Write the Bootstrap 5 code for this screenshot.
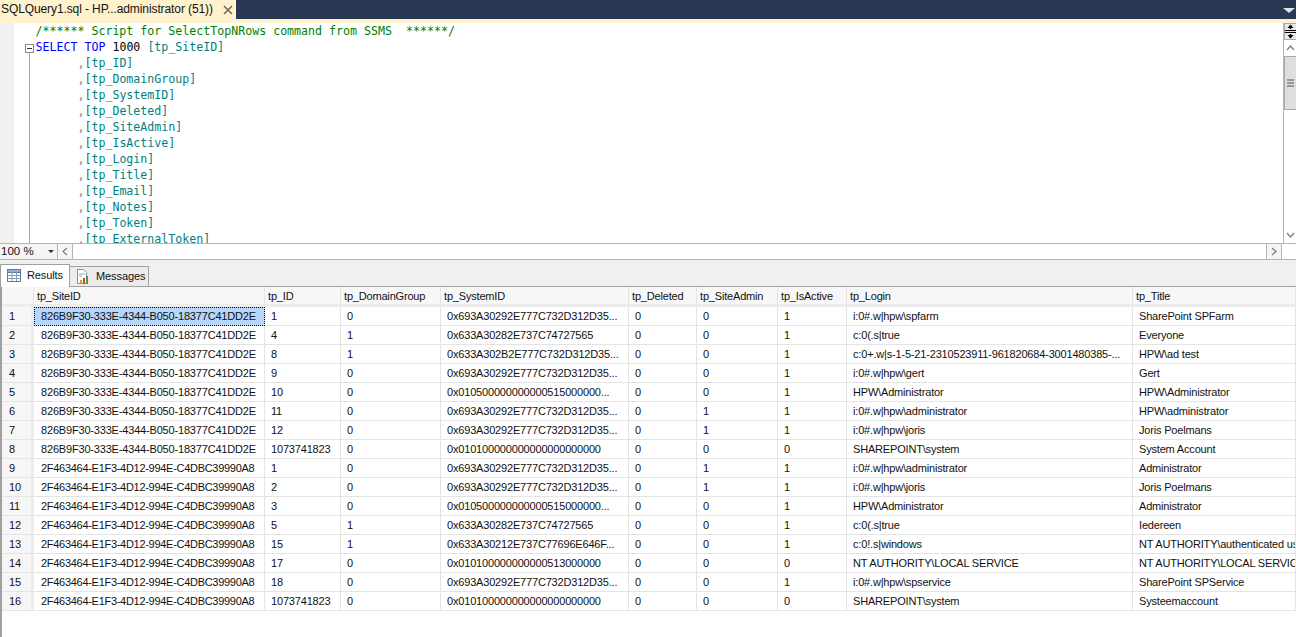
<!DOCTYPE html>
<html lang="en">
<head>
<meta charset="utf-8">
<title>SQLQuery1.sql</title>
<link href="https://cdn.jsdelivr.net/npm/bootstrap@5.3.0/dist/css/bootstrap.min.css" rel="stylesheet">
<style>
html,body{height:637px;overflow:hidden;background:#fff}
body{font-family:"Liberation Sans",Arial,sans-serif;font-size:12px;color:#111}
.app-top{height:19px;background:#293955}
.doc-tab{width:236px;height:19px;background:#fff2cc;color:#111;font-size:12px;letter-spacing:-.1px;line-height:19px;padding-left:1px;white-space:nowrap}
.tab-close{width:14px;height:14px;margin-left:8px;flex:none}
.top-drop{width:0;height:0;border-left:6px solid transparent;border-right:6px solid transparent;border-top:5px solid #dfe3ea;margin:1px 1px 0 0}
.app-strip{height:4px;background:#fff2cc}
.editor{height:220px;overflow:hidden}
.ed-margin{width:14px;background:#f0f0f0;flex:none}
.ed-fold{width:21.500px;flex:none;position:relative}
.fold-box{position:absolute;left:11px;top:21px;width:9px;height:9px;border:1px solid #8a8a8a;background:#fff}
.fold-box::after{content:"";position:absolute;left:1px;right:1px;top:3px;height:1px;background:#333}
.fold-line{position:absolute;left:15px;top:30px;bottom:0;width:1px;background:#a5a5a5}
.code{font-family:"DejaVu Sans Mono","Liberation Mono",monospace;font-size:11.62px;line-height:16px;white-space:pre;padding-top:0;margin:0;flex:1;min-width:0;overflow:hidden}
.c-g{color:#008000}.c-b{color:#0000ff}.c-t{color:#008080}.c-d{color:#808080}.c-k{color:#000}
.vbar{width:13px;flex:none;background:#fff;border-left:1px solid #b5b5b5;display:flex;flex-direction:column}
.split-btn{height:17px;background:#e6e9ef;border:1px solid #a9a9a9;border-right:0}
.arrow-cell{height:16px;display:flex;align-items:center;justify-content:center}
.v-thumb{height:54px;background:#dedede;border:1px solid #a8a8a8;border-width:1px 0 1px 1px;display:flex;align-items:center;justify-content:center}
.hbar{height:17px;background:#fff;border-top:1px solid #b5b5b5;border-bottom:1px solid #b5b5b5;padding-right:14px}
.zoom-box{width:57px;line-height:15px;padding-left:1px;font-size:11.5px;position:relative;background:#f5f5f5}
.zoom-caret{position:absolute;left:48px;top:6px;width:0;height:0;border-left:3px solid transparent;border-right:3px solid transparent;border-top:3px solid #333}
.h-arrow{width:16px;display:flex;align-items:center;justify-content:center;background:#f5f5f5;border:solid #b5b5b5;border-width:0 1px}
.h-track{flex:1;background:#fff}
.tabs-band{height:26px;background:#f0f0f0;padding-top:4px;position:relative;font-size:11px;letter-spacing:-.1px}
.res-tab{border:1px solid #a0a0a0;border-bottom:0;display:flex;align-items:center}
.res-tab.on{width:70px;height:23px;background:#fff;padding:0 0 2px 6px;position:relative;z-index:1}
.res-tab.off{width:80px;margin-top:2px;margin-left:-1px;height:20px;background:#ececec;padding-left:6px}
.res-tab svg{margin-right:6px;flex:none}
.grid-wrap{border-top:1px solid #a0a0a0;border-left:2px solid #a0a0a0;height:352px;overflow:hidden;background:#fff}
.rs{table-layout:fixed;width:1294px;border-collapse:separate;border-spacing:0;margin:0;font-size:11px;letter-spacing:-.18px;color:#111}
.rs th,.rs td{font-weight:400;height:19px;padding:0 0 0 6px;line-height:18px;white-space:nowrap;overflow:hidden;border-right:1px solid #e4e4e4;border-bottom:1px solid #e4e4e4}
.rs th{height:20px;background:#f7f7f7;padding:2px 0 0 3px;border-bottom:3px solid #ececec;line-height:15px}
.rs .corner{background:#f7f7f7}
.rs .rowno{background:#f6f6f6;border-right:3px solid #ececec;padding-left:7px}
.rs .sel{background:#b5d5fb;outline:1px dotted #000;outline-offset:-1px}
.rs td.gid{padding-left:7px}
.rs td.gid-tight{letter-spacing:-.29px}
</style>
</head>
<body>
<div class="app-top d-flex justify-content-between align-items-center">
  <div class="doc-tab d-flex align-items-center"><span>SQLQuery1.sql - HP...administrator (51))</span>
    <svg class="tab-close" viewBox="0 0 14 14"><path d="M3 3l8 8M11 3l-8 8" stroke="#6b6b5d" stroke-width="1.6" fill="none"/></svg></div>
  <div class="top-drop"></div>
</div>
<div class="app-strip"></div>
<div class="editor d-flex">
  <div class="ed-margin"></div>
  <div class="ed-fold"><div class="fold-box"></div><div class="fold-line"></div></div>
  <pre class="code"><span class="c-g">/****** Script for SelectTopNRows command from SSMS  ******/</span>
<span class="c-b">SELECT</span> <span class="c-b">TOP</span> <span class="c-k">1000</span> <span class="c-t">[tp_SiteID]</span>
      <span class="c-d">,</span><span class="c-t">[tp_ID]</span>
      <span class="c-d">,</span><span class="c-t">[tp_DomainGroup]</span>
      <span class="c-d">,</span><span class="c-t">[tp_SystemID]</span>
      <span class="c-d">,</span><span class="c-t">[tp_Deleted]</span>
      <span class="c-d">,</span><span class="c-t">[tp_SiteAdmin]</span>
      <span class="c-d">,</span><span class="c-t">[tp_IsActive]</span>
      <span class="c-d">,</span><span class="c-t">[tp_Login]</span>
      <span class="c-d">,</span><span class="c-t">[tp_Title]</span>
      <span class="c-d">,</span><span class="c-t">[tp_Email]</span>
      <span class="c-d">,</span><span class="c-t">[tp_Notes]</span>
      <span class="c-d">,</span><span class="c-t">[tp_Token]</span>
      <span class="c-d">,</span><span class="c-t">[tp_ExternalToken]</span></pre>
  <div class="vbar">
    <div class="split-btn d-flex align-items-center justify-content-center">
      <svg width="11" height="15" viewBox="0 0 11 15"><path d="M0 6.500h11M0 8.500h11" stroke="#000"/><path d="M5.500 1v4M5.500 10v4" stroke="#000" stroke-width="1.400"/><path d="M2.500 4l3-3.500 3 3.500zM2.500 11l3 3.500 3-3.500z" fill="#000"/></svg>
    </div>
    <div class="arrow-cell"><svg width="9" height="6" viewBox="0 0 9 6"><path d="M1 5l3.500-4 3.500 4" stroke="#7a7a7a" stroke-width="1.200" fill="none"/></svg></div>
    <div class="v-thumb"><svg width="7" height="8" viewBox="0 0 7 8"><path d="M0 1h7M0 4h7M0 7h7" stroke="#808080" stroke-width="1.600"/></svg></div>
    <div class="flex-grow-1"></div>
    <div class="arrow-cell"><svg width="9" height="6" viewBox="0 0 9 6"><path d="M1 1l3.500 4 3.500-4" stroke="#7a7a7a" stroke-width="1.200" fill="none"/></svg></div>
  </div>
</div>
<div class="hbar d-flex">
  <div class="zoom-box">100 %<span class="zoom-caret"></span></div>
  <div class="h-arrow"><svg width="6" height="9" viewBox="0 0 6 9"><path d="M5 1L1 4.500 5 8" stroke="#7a7a7a" stroke-width="1.200" fill="none"/></svg></div>
  <div class="h-track"></div>
  <div class="h-arrow"><svg width="6" height="9" viewBox="0 0 6 9"><path d="M1 1l4 3.500L1 8" stroke="#7a7a7a" stroke-width="1.200" fill="none"/></svg></div>
</div>
<div class="tabs-band d-flex align-items-start">
  <div class="res-tab on">
    <svg width="14" height="13" viewBox="0 0 14 13"><rect x=".5" y=".5" width="13" height="12" fill="#fff" stroke="#5f7f9f"/><rect x=".5" y=".5" width="13" height="3" fill="#8fb0d0" stroke="#5f7f9f"/><path d="M5 3v9M9.500 3v9M1 6.500h12M1 9.500h12" stroke="#7f9fbf"/></svg>
    <span>Results</span>
  </div>
  <div class="res-tab off">
    <svg width="14" height="17" viewBox="0 0 14 17"><path d="M1.500 1.500h6l3 3v11h-9z" fill="#fff" stroke="#8a8f96"/><path d="M3 6h6M3 8h3" stroke="#9aa5b5"/><rect x="7" y="10" width="2" height="6" fill="#d04030"/><rect x="10" y="8" width="2" height="8" fill="#3f9f4f"/><rect x="4" y="12" width="2" height="4" fill="#d9a020"/></svg>
    <span>Messages</span>
  </div>
</div>
<div class="grid-wrap">
<table class="rs">
<colgroup><col style="width:32px"><col style="width:231px"><col style="width:76px"><col style="width:100px"><col style="width:188px"><col style="width:68px"><col style="width:81px"><col style="width:69px"><col style="width:286px"><col></colgroup>
<thead><tr><th class="corner"></th><th>tp_SiteID</th><th>tp_ID</th><th>tp_DomainGroup</th><th>tp_SystemID</th><th>tp_Deleted</th><th>tp_SiteAdmin</th><th>tp_IsActive</th><th>tp_Login</th><th>tp_Title</th></tr></thead>
<tbody>
<tr><td class="rowno">1</td><td class="gid sel">826B9F30-333E-4344-B050-18377C41DD2E</td><td>1</td><td>0</td><td>0x693A30292E777C732D312D35...</td><td>0</td><td>0</td><td>1</td><td>i:0#.w|hpw\spfarm</td><td>SharePoint SPFarm</td></tr>
<tr><td class="rowno">2</td><td class="gid">826B9F30-333E-4344-B050-18377C41DD2E</td><td>4</td><td>1</td><td>0x633A30282E737C74727565</td><td>0</td><td>0</td><td>1</td><td>c:0(.s|true</td><td>Everyone</td></tr>
<tr><td class="rowno">3</td><td class="gid">826B9F30-333E-4344-B050-18377C41DD2E</td><td>8</td><td>1</td><td>0x633A302B2E777C732D312D35...</td><td>0</td><td>0</td><td>1</td><td>c:0+.w|s-1-5-21-2310523911-961820684-3001480385-...</td><td>HPW\ad test</td></tr>
<tr><td class="rowno">4</td><td class="gid">826B9F30-333E-4344-B050-18377C41DD2E</td><td>9</td><td>0</td><td>0x693A30292E777C732D312D35...</td><td>0</td><td>0</td><td>1</td><td>i:0#.w|hpw\gert</td><td>Gert</td></tr>
<tr><td class="rowno">5</td><td class="gid">826B9F30-333E-4344-B050-18377C41DD2E</td><td>10</td><td>0</td><td>0x010500000000000515000000...</td><td>0</td><td>0</td><td>1</td><td>HPW\Administrator</td><td>HPW\Administrator</td></tr>
<tr><td class="rowno">6</td><td class="gid">826B9F30-333E-4344-B050-18377C41DD2E</td><td>11</td><td>0</td><td>0x693A30292E777C732D312D35...</td><td>0</td><td>1</td><td>1</td><td>i:0#.w|hpw\administrator</td><td>HPW\administrator</td></tr>
<tr><td class="rowno">7</td><td class="gid">826B9F30-333E-4344-B050-18377C41DD2E</td><td>12</td><td>0</td><td>0x693A30292E777C732D312D35...</td><td>0</td><td>1</td><td>1</td><td>i:0#.w|hpw\joris</td><td>Joris Poelmans</td></tr>
<tr><td class="rowno">8</td><td class="gid">826B9F30-333E-4344-B050-18377C41DD2E</td><td>1073741823</td><td>0</td><td>0x010100000000000000000000</td><td>0</td><td>0</td><td>0</td><td>SHAREPOINT\system</td><td>System Account</td></tr>
<tr><td class="rowno">9</td><td class="gid gid-tight">2F463464-E1F3-4D12-994E-C4DBC39990A8</td><td>1</td><td>0</td><td>0x693A30292E777C732D312D35...</td><td>0</td><td>1</td><td>1</td><td>i:0#.w|hpw\administrator</td><td>Administrator</td></tr>
<tr><td class="rowno">10</td><td class="gid gid-tight">2F463464-E1F3-4D12-994E-C4DBC39990A8</td><td>2</td><td>0</td><td>0x693A30292E777C732D312D35...</td><td>0</td><td>1</td><td>1</td><td>i:0#.w|hpw\joris</td><td>Joris Poelmans</td></tr>
<tr><td class="rowno">11</td><td class="gid gid-tight">2F463464-E1F3-4D12-994E-C4DBC39990A8</td><td>3</td><td>0</td><td>0x010500000000000515000000...</td><td>0</td><td>0</td><td>1</td><td>HPW\Administrator</td><td>Administrator</td></tr>
<tr><td class="rowno">12</td><td class="gid gid-tight">2F463464-E1F3-4D12-994E-C4DBC39990A8</td><td>5</td><td>1</td><td>0x633A30282E737C74727565</td><td>0</td><td>0</td><td>1</td><td>c:0(.s|true</td><td>Iedereen</td></tr>
<tr><td class="rowno">13</td><td class="gid gid-tight">2F463464-E1F3-4D12-994E-C4DBC39990A8</td><td>15</td><td>1</td><td>0x633A30212E737C77696E646F...</td><td>0</td><td>0</td><td>1</td><td>c:0!.s|windows</td><td>NT AUTHORITY\authenticated users</td></tr>
<tr><td class="rowno">14</td><td class="gid gid-tight">2F463464-E1F3-4D12-994E-C4DBC39990A8</td><td>17</td><td>0</td><td>0x010100000000000513000000</td><td>0</td><td>0</td><td>0</td><td>NT AUTHORITY\LOCAL SERVICE</td><td>NT AUTHORITY\LOCAL SERVICE</td></tr>
<tr><td class="rowno">15</td><td class="gid gid-tight">2F463464-E1F3-4D12-994E-C4DBC39990A8</td><td>18</td><td>0</td><td>0x693A30292E777C732D312D35...</td><td>0</td><td>0</td><td>1</td><td>i:0#.w|hpw\spservice</td><td>SharePoint SPService</td></tr>
<tr><td class="rowno">16</td><td class="gid gid-tight">2F463464-E1F3-4D12-994E-C4DBC39990A8</td><td>1073741823</td><td>0</td><td>0x010100000000000000000000</td><td>0</td><td>0</td><td>0</td><td>SHAREPOINT\system</td><td>Systeemaccount</td></tr>
</tbody>
</table>
</div>
<script src="https://cdn.jsdelivr.net/npm/bootstrap@5.3.0/dist/js/bootstrap.bundle.min.js"></script>
</body>
</html>
